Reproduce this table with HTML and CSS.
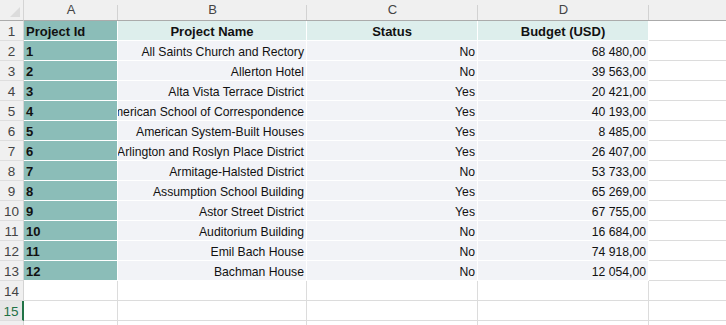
FILE: index.html
```html
<!DOCTYPE html>
<html>
<head>
<meta charset="utf-8">
<link rel="stylesheet" href="styles.css">
</head>
<body>
<div class="sheet">
  <div class="corner"><span class="tri"></span></div>
  <div class="colhead">A</div>
  <div class="colhead">B</div>
  <div class="colhead">C</div>
  <div class="colhead">D</div>
  <div class="colhead last"></div>

  <div class="rowhead">1</div>
  <div class="cell id hdr">Project Id</div>
  <div class="cell th">Project Name</div>
  <div class="cell th">Status</div>
  <div class="cell th">Budget (USD)</div>
  <div class="cell blank"></div>

  <div class="rowhead">2</div><div class="cell id">1</div><div class="cell td"><span>All Saints Church and Rectory</span></div><div class="cell td"><span>No</span></div><div class="cell td"><span>68 480,00</span></div><div class="cell blank"></div>
  <div class="rowhead">3</div><div class="cell id">2</div><div class="cell td"><span>Allerton Hotel</span></div><div class="cell td"><span>No</span></div><div class="cell td"><span>39 563,00</span></div><div class="cell blank"></div>
  <div class="rowhead">4</div><div class="cell id">3</div><div class="cell td"><span>Alta Vista Terrace District</span></div><div class="cell td"><span>Yes</span></div><div class="cell td"><span>20 421,00</span></div><div class="cell blank"></div>
  <div class="rowhead">5</div><div class="cell id">4</div><div class="cell td"><span>American School of Correspondence</span></div><div class="cell td"><span>Yes</span></div><div class="cell td"><span>40 193,00</span></div><div class="cell blank"></div>
  <div class="rowhead">6</div><div class="cell id">5</div><div class="cell td"><span>American System-Built Houses</span></div><div class="cell td"><span>Yes</span></div><div class="cell td"><span>8 485,00</span></div><div class="cell blank"></div>
  <div class="rowhead">7</div><div class="cell id">6</div><div class="cell td"><span>Arlington and Roslyn Place District</span></div><div class="cell td"><span>Yes</span></div><div class="cell td"><span>26 407,00</span></div><div class="cell blank"></div>
  <div class="rowhead">8</div><div class="cell id">7</div><div class="cell td"><span>Armitage-Halsted District</span></div><div class="cell td"><span>No</span></div><div class="cell td"><span>53 733,00</span></div><div class="cell blank"></div>
  <div class="rowhead">9</div><div class="cell id">8</div><div class="cell td"><span>Assumption School Building</span></div><div class="cell td"><span>Yes</span></div><div class="cell td"><span>65 269,00</span></div><div class="cell blank"></div>
  <div class="rowhead">10</div><div class="cell id">9</div><div class="cell td"><span>Astor Street District</span></div><div class="cell td"><span>Yes</span></div><div class="cell td"><span>67 755,00</span></div><div class="cell blank"></div>
  <div class="rowhead">11</div><div class="cell id">10</div><div class="cell td"><span>Auditorium Building</span></div><div class="cell td"><span>No</span></div><div class="cell td"><span>16 684,00</span></div><div class="cell blank"></div>
  <div class="rowhead">12</div><div class="cell id">11</div><div class="cell td"><span>Emil Bach House</span></div><div class="cell td"><span>No</span></div><div class="cell td"><span>74 918,00</span></div><div class="cell blank"></div>
  <div class="rowhead">13</div><div class="cell id">12</div><div class="cell td"><span>Bachman House</span></div><div class="cell td"><span>No</span></div><div class="cell td"><span>12 054,00</span></div><div class="cell blank"></div>

  <div class="rowhead">14</div><div class="cell empty"></div><div class="cell empty"></div><div class="cell empty"></div><div class="cell empty"></div><div class="cell blank"></div>
  <div class="rowhead active">15</div><div class="cell empty"></div><div class="cell empty"></div><div class="cell empty"></div><div class="cell empty"></div><div class="cell blank"></div>
  <div class="rowhead"></div><div class="cell empty"></div><div class="cell empty"></div><div class="cell empty"></div><div class="cell empty"></div><div class="cell blank"></div>
</div>
</body>
</html>
```
FILE: styles.css
```css
html, body {
  margin: 0;
  padding: 0;
  background: #ffffff;
  overflow: hidden;
}

.sheet {
  display: grid;
  grid-template-columns: 24px 94px 189px 171px 171px 1fr;
  grid-template-rows: 21px repeat(16, 20px);
  width: 726px;
  height: 325px;
  overflow: hidden;
  font-family: "Liberation Sans", Arial, sans-serif;
  color: #111111;
}

.corner {
  background: #f0f0f0;
  border-right: 1px solid #d4d4d4;
  border-bottom: 1px solid #ababab;
  box-sizing: border-box;
  display: flex;
  align-items: flex-end;
  justify-content: flex-end;
  padding: 0 3px 3px 0;
}

.tri {
  width: 0;
  height: 0;
  border-left: 10px solid transparent;
  border-bottom: 10px solid #dcdcdc;
}

.colhead {
  box-sizing: border-box;
  background: #f0f0f0 linear-gradient(#d2d2d2, #d2d2d2) no-repeat right 0 top 5px / 1px 15px;
  border-bottom: 1px solid #ababab;
  font-size: 13px;
  line-height: 20px;
  text-align: center;
  color: #444444;
}

.colhead.last {
  background: #f0f0f0;
}

.rowhead {
  box-sizing: border-box;
  background: #f0f0f0;
  border-right: 1px solid #d4d4d4;
  border-bottom: 1px solid #dedede;
  font-size: 13.5px;
  line-height: 22px;
  overflow: hidden;
  text-align: center;
  color: #444444;
}

.rowhead.active {
  color: #1e7145;
  background: #e6e6e6;
  border-right: 2px solid #217346;
}

.cell {
  box-sizing: border-box;
  border-right: 1px solid #ffffff;
  border-bottom: 1px solid #ffffff;
  line-height: 22px;
  white-space: nowrap;
  overflow: hidden;
}

.id {
  background: #8bbdb8;
  font-weight: bold;
  font-size: 13px;
  padding-left: 2px;
}

.th {
  background: #ddeeec;
  font-weight: bold;
  font-size: 13px;
  text-align: center;
}

.td {
  background: #f2f3f7;
  font-size: 12.2px;
  display: flex;
  justify-content: flex-end;
  padding-right: 2px;
}

.td span {
  flex: none;
}

.empty {
  border-right-color: #dcdcdc;
  border-bottom-color: #dcdcdc;
}

.blank {
  border-right: none;
  border-bottom-color: #dcdcdc;
}
```
